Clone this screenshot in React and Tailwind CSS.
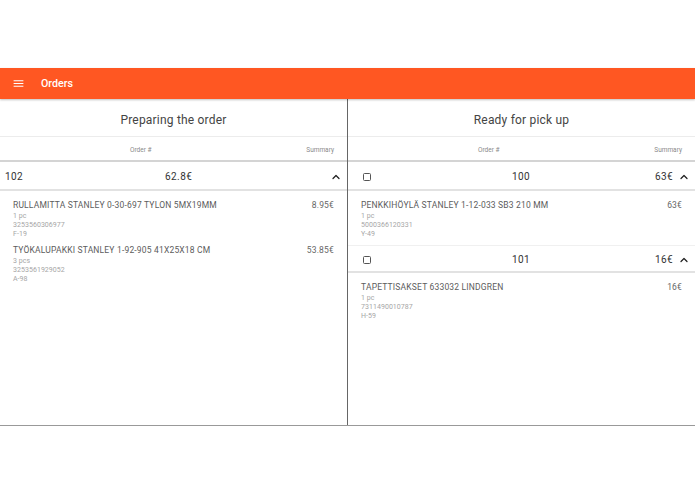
import React from "react";
import { ChevronUp } from "lucide-react";

function MenuIcon() {
  return (
    <svg viewBox="0 0 24 24" className="w-[13px] h-[13px] ml-[11.5px] fill-white">
      <path d="M3 18h18v-2H3v2zm0-5h18v-2H3v2zm0-7v2h18V6H3z" />
    </svg>
  );
}

function Item({ name, price, qty, code, loc, last }) {
  return (
    <div className={`flex justify-between px-[13px] ${last ? "" : "mb-[5px]"}`}>
      <div>
        <div className="text-[8.5px] leading-[13px] tracking-[0.18px] text-[#5c5c5c]">{name}</div>
        <div className="text-[7px] leading-[9px] text-[#a6a6a6] tracking-[0.05px]">{qty}</div>
        <div className="text-[7px] leading-[9px] text-[#a6a6a6] tracking-[0.05px]">{code}</div>
        <div className="text-[7px] leading-[9px] text-[#a6a6a6] tracking-[0.05px]">{loc}</div>
      </div>
      <div className="text-[8.5px] leading-[13px] tracking-[0.18px] text-[#666]">{price}</div>
    </div>
  );
}

function TableHead({ left }) {
  return (
    <div className="h-[26px] border-t border-[#ececec] border-b-2 border-b-[#d4d4d4] flex items-center justify-between pr-[13px] pt-[4px] text-[6.5px] text-[#8a8a8a]">
      <div className={left}>Order #</div>
      <div>Summary</div>
    </div>
  );
}

function Box() {
  return <div className="w-[8px] h-[8px] rounded-[1.5px] border border-[#555]" />;
}

export default function App() {
  return (
    <div className="w-[695px] h-[494px] bg-white overflow-hidden pt-[68px] font-['Roboto',sans-serif]">
      <header className="h-[31px] bg-[#ff5722] flex items-center text-white shadow-[0_1px_2px_rgba(0,0,0,0.25)] relative z-10">
        <MenuIcon />
        <span className="ml-[16.5px] pt-[1px] text-[10.7px] font-medium">Orders</span>
      </header>
      <div className="h-[327px] border-b border-[#999] flex">
        <section className="w-[348px] shrink-0 border-r border-[#666]">
          <h2 className="h-[37px] pt-[4px] flex items-center justify-center text-[12px] text-[#444] tracking-[0.2px]">Preparing the order</h2>
          <TableHead left="ml-[130px]" />
          <div className="h-[29px] pt-[2px] flex items-center border-b-2 border-[#e2e2e2] text-[10px] text-[#333] tracking-[0.4px]">
            <span className="ml-[5px]">102</span>
            <span className="ml-[142px]">62.8€</span>
            <ChevronUp className="w-[12px] h-[12px] ml-auto mr-[5.5px] text-[#222]" strokeWidth={2.5} />
          </div>
          <div className="pt-[8px]">
            <Item name="RULLAMITTA STANLEY 0-30-697 TYLON 5MX19MM" price="8.95€" qty="1 pc" code="3253560306977" loc="F-19" />
            <Item name="TYÖKALUPAKKI STANLEY 1-92-905 41X25X18 CM" price="53.85€" qty="3 pcs" code="3253561929052" loc="A-98" last />
          </div>
        </section>
        <section className="flex-1">
          <h2 className="h-[37px] pt-[4px] flex items-center justify-center text-[12px] text-[#444] tracking-[0.2px]">Ready for pick up</h2>
          <TableHead left="ml-[130px]" />
          <div className="h-[29px] pt-[2px] flex items-center border-b-2 border-[#e2e2e2] text-[10px] text-[#333] tracking-[0.4px]">
            <div className="ml-[15px]"><Box /></div>
            <span className="ml-[141px]">100</span>
            <span className="ml-auto">63€</span>
            <ChevronUp className="w-[12px] h-[12px] ml-[5px] mr-[5px] text-[#222]" strokeWidth={2.5} />
          </div>
          <div className="pt-[8px] h-[54px]">
            <Item name="PENKKIHÖYLÄ STANLEY 1-12-033 SB3 210 MM" price="63€" qty="1 pc" code="5000366120331" loc="Y-49" last />
          </div>
          <div className="h-[28px] pt-[2px] flex items-center border-t border-t-[#f0f0f0] border-b-2 border-[#e2e2e2] text-[10px] text-[#333] tracking-[0.4px]">
            <div className="ml-[15px]"><Box /></div>
            <span className="ml-[141px]">101</span>
            <span className="ml-auto">16€</span>
            <ChevronUp className="w-[12px] h-[12px] ml-[5px] mr-[5px] text-[#222]" strokeWidth={2.5} />
          </div>
          <div className="pt-[8px]">
            <Item name="TAPETTISAKSET 633032 LINDGREN" price="16€" qty="1 pc" code="7311490010787" loc="H-59" last />
          </div>
        </section>
      </div>
    </div>
  );
}
